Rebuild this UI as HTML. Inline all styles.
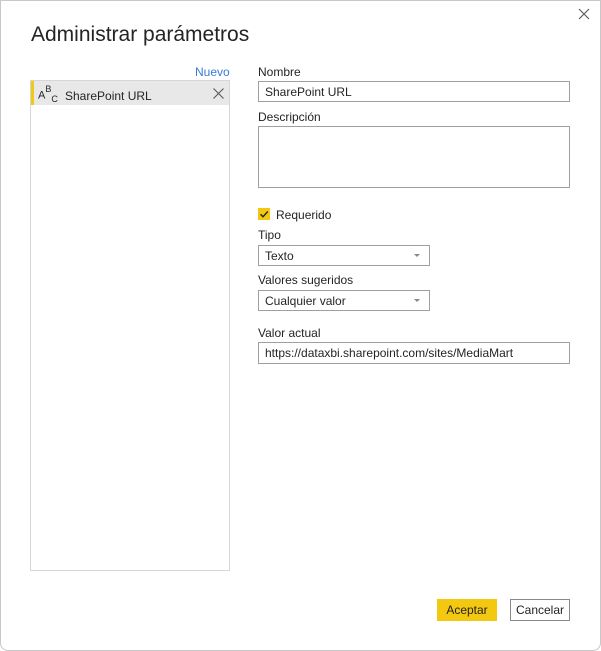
<!DOCTYPE html>
<html><head><meta charset="utf-8"><style>
*{box-sizing:border-box;margin:0;padding:0}
body{width:601px;height:651px;background:#fff;font-family:"Liberation Sans",sans-serif;font-size:12px;color:#252423;position:relative;overflow:hidden}
.win{position:absolute;left:0;top:0;width:601px;height:651px;border:1px solid #c8c8c8;border-radius:0 0 8px 8px}
.a{position:absolute}
.lbl{position:absolute;left:258px;font-size:12px;color:#252423}
.inp{position:absolute;left:258px;border:1px solid #a19f9d;background:#fff;padding:1px 6px 0;font-size:12px;line-height:19px;color:#252423}
.arr{position:absolute;right:9px;top:8px;width:0;height:0;border-left:3px solid transparent;border-right:3px solid transparent;border-top:3px solid #8a8886}
</style></head><body>
<div class="win"></div>
<div class="a" style="left:31px;top:23px;font-size:21px;color:#252423">Administrar parámetros</div>
<svg class="a" style="left:578px;top:8px" width="12" height="12"><path d="M1 1L11 11M11 1L1 11" stroke="#605e5c" stroke-width="1.2"/></svg>
<div class="a" style="left:195px;top:65px;color:#3a7bd5;font-size:12px">Nuevo</div>
<div class="a" style="left:30px;top:80px;width:200px;height:491px;border:1px solid #d6d6d6"></div>
<div class="a" style="left:31px;top:81px;width:198px;height:24px;background:#e8e8e8"></div>
<div class="a" style="left:31px;top:81px;width:3px;height:24px;background:#f2c811"></div>
<div class="a" style="left:38px;top:86px;font-size:11px;color:#252423">A<sup style="font-size:9px;position:relative;top:-2px">B</sup><span style="font-size:9px;position:relative;top:3px">C</span></div>
<div class="a" style="left:65px;top:89px">SharePoint URL</div>
<svg class="a" style="left:213px;top:88px" width="11" height="11"><path d="M0.5 0.5L10.5 10.5M10.5 0.5L0.5 10.5" stroke="#605e5c" stroke-width="1.2"/></svg>

<div class="lbl" style="top:65px">Nombre</div>
<div class="inp" style="top:81px;width:312px;height:21px">SharePoint URL</div>
<div class="lbl" style="top:110px">Descripción</div>
<div class="inp" style="top:126px;width:312px;height:62px"></div>
<div class="a" style="left:258px;top:208px;width:12px;height:12px;background:#f2c811"></div>
<svg class="a" style="left:258px;top:208px" width="12" height="12"><path d="M2.5 6.2L5 8.7L9.8 3.5" stroke="#252423" stroke-width="1.4" fill="none"/></svg>
<div class="a" style="left:276px;top:208px">Requerido</div>
<div class="lbl" style="top:228px">Tipo</div>
<div class="inp" style="top:245px;width:172px;height:21px">Texto<span class="arr"></span></div>
<div class="lbl" style="top:273px">Valores sugeridos</div>
<div class="inp" style="top:290px;width:172px;height:21px">Cualquier valor<span class="arr"></span></div>
<div class="lbl" style="top:326px">Valor actual</div>
<div class="inp" style="top:342px;width:312px;height:22px">https://dataxbi.sharepoint.com/sites/MediaMart</div>

<div class="a" style="left:437px;top:599px;width:60px;height:22px;background:#f2c811;text-align:center;line-height:22px">Aceptar</div>
<div class="a" style="left:510px;top:599px;width:60px;height:22px;border:1px solid #8a8886;text-align:center;line-height:20px">Cancelar</div>
</body></html>
